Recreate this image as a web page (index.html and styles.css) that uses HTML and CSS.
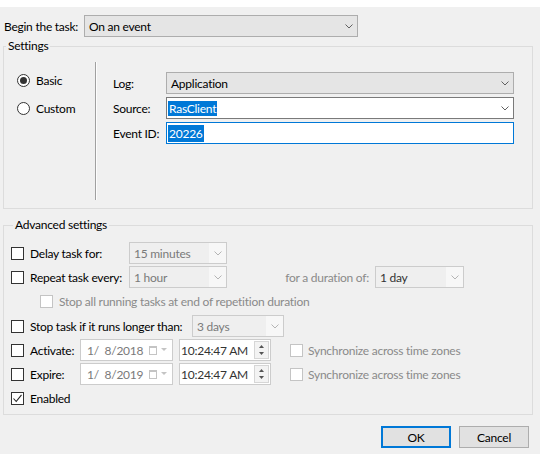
FILE: index.html
```html
<!DOCTYPE html>
<html>
<head>
    <title>Task Trigger</title>
    <link rel="stylesheet" href="styles.css">
</head>
<body>
    <div class="top-gap"></div>
    <div class="dialog">
        <div class="begin-row">
            <span class="begin-label">Begin the task:</span>
            <div class="combo combo-begin">
                <span class="combo-text">On an event</span>
                <span class="combo-arrow"><svg width="8" height="5" viewBox="0 0 8 5"><path d="M0.5 0.5 L4 4 L7.5 0.5" fill="none" stroke="#606060"/></svg></span>
            </div>
        </div>

        <fieldset class="group settings">
            <legend>Settings</legend>
            <div class="settings-body">
                <div class="radio-col">
                    <div class="radio-item"><span class="radio checked"></span>Basic</div>
                    <div class="radio-item"><span class="radio"></span>Custom</div>
                </div>
                <div class="vsep"></div>
                <div class="event-form">
                    <span class="field-label">Log:</span>
                    <div class="combo combo-gray">
                        <span class="combo-text">Application</span>
                        <span class="combo-arrow"><svg width="8" height="5" viewBox="0 0 8 5"><path d="M0.5 0.5 L4 4 L7.5 0.5" fill="none" stroke="#606060"/></svg></span>
                    </div>
                    <span class="field-label">Source:</span>
                    <div class="combo combo-edit">
                        <span class="combo-text"><span class="sel">RasClient</span></span>
                        <span class="combo-arrow"><svg width="8" height="5" viewBox="0 0 8 5"><path d="M0.5 0.5 L4 4 L7.5 0.5" fill="none" stroke="#606060"/></svg></span>
                    </div>
                    <span class="field-label">Event ID:</span>
                    <div class="textbox focused"><span class="sel">20226</span></div>
                </div>
            </div>
        </fieldset>

        <fieldset class="group advanced">
            <legend>Advanced settings</legend>

            <div class="adv-row">
                <span class="check"></span>
                <span class="chk-label w-delay">Delay task for:</span>
                <div class="combo combo-off w-small">
                    <span class="combo-text">15 minutes</span>
                    <span class="combo-arrow"><svg width="8" height="5" viewBox="0 0 8 5"><path d="M0.5 0.5 L4 4 L7.5 0.5" fill="none" stroke="#b4b4b4"/></svg></span>
                </div>
            </div>

            <div class="adv-row">
                <span class="check"></span>
                <span class="chk-label w-delay">Repeat task every:</span>
                <div class="combo combo-off w-small">
                    <span class="combo-text">1 hour</span>
                    <span class="combo-arrow"><svg width="8" height="5" viewBox="0 0 8 5"><path d="M0.5 0.5 L4 4 L7.5 0.5" fill="none" stroke="#b4b4b4"/></svg></span>
                </div>
                <span class="duration-label">for a duration of:</span>
                <div class="combo combo-off w-duration">
                    <span class="combo-text dark">1 day</span>
                    <span class="combo-arrow"><svg width="8" height="5" viewBox="0 0 8 5"><path d="M0.5 0.5 L4 4 L7.5 0.5" fill="none" stroke="#b4b4b4"/></svg></span>
                </div>
            </div>

            <div class="adv-row sub-row">
                <span class="check off"></span>
                <span class="muted">Stop all running tasks at end of repetition duration</span>
            </div>

            <div class="adv-row stop-row">
                <span class="check"></span>
                <span class="chk-label w-stop">Stop task if it runs longer than:</span>
                <div class="combo combo-off w-stopbox">
                    <span class="combo-text">3 days</span>
                    <span class="combo-arrow"><svg width="8" height="5" viewBox="0 0 8 5"><path d="M0.5 0.5 L4 4 L7.5 0.5" fill="none" stroke="#b4b4b4"/></svg></span>
                </div>
            </div>

            <div class="adv-row">
                <span class="check"></span>
                <span class="chk-label w-date">Activate:</span>
                <div class="picker date-picker">
                    <span class="picker-text">1/&nbsp; 8/2018</span>
                    <span class="cal-icon"></span>
                    <svg class="cal-arrow" width="6" height="4" viewBox="0 0 6 4"><path d="M0 0 H6 L3 3 Z" fill="#c4c4c4"/></svg>
                </div>
                <div class="picker time-picker">
                    <span class="picker-text dark">10:24:47 AM</span>
                    <span class="spinner">
                        <svg width="5" height="3" viewBox="0 0 5 3"><path d="M0 3 L2.5 0 L5 3 Z" fill="#555"/></svg>
                        <svg width="5" height="3" viewBox="0 0 5 3"><path d="M0 0 H5 L2.5 3 Z" fill="#555"/></svg>
                    </span>
                </div>
                <span class="check off sync-check"></span>
                <span class="muted">Synchronize across time zones</span>
            </div>

            <div class="adv-row">
                <span class="check"></span>
                <span class="chk-label w-date">Expire:</span>
                <div class="picker date-picker">
                    <span class="picker-text">1/&nbsp; 8/2019</span>
                    <span class="cal-icon"></span>
                    <svg class="cal-arrow" width="6" height="4" viewBox="0 0 6 4"><path d="M0 0 H6 L3 3 Z" fill="#c4c4c4"/></svg>
                </div>
                <div class="picker time-picker">
                    <span class="picker-text dark">10:24:47 AM</span>
                    <span class="spinner">
                        <svg width="5" height="3" viewBox="0 0 5 3"><path d="M0 3 L2.5 0 L5 3 Z" fill="#555"/></svg>
                        <svg width="5" height="3" viewBox="0 0 5 3"><path d="M0 0 H5 L2.5 3 Z" fill="#555"/></svg>
                    </span>
                </div>
                <span class="check off sync-check"></span>
                <span class="muted">Synchronize across time zones</span>
            </div>

            <div class="adv-row enabled-row">
                <span class="check checked">
                    <svg width="11" height="11" viewBox="0 0 11 11"><path d="M1.5 5.5 L4.2 8.5 L9.5 1.8" fill="none" stroke="#222" stroke-width="1.1"/></svg>
                </span>
                <span class="chk-label">Enabled</span>
            </div>
        </fieldset>

        <div class="button-row">
            <button class="btn btn-default">OK</button>
            <button class="btn">Cancel</button>
        </div>
    </div>
</body>
</html>
```

FILE: styles.css
```css
html, body {
    margin: 0;
    padding: 0;
}
body {
    width: 540px;
    height: 454px;
    overflow: hidden;
    font-family: Lato, "Segoe UI", sans-serif;
    font-size: 12px;
    letter-spacing: -0.25px;
    color: #000;
    background: #fff;
}
.top-gap {
    height: 7px;
    background: #fff;
}
.dialog {
    height: 447px;
    background: #f0f0f0;
    box-sizing: border-box;
    padding-top: 8px;
}

/* begin row */
.begin-row {
    display: flex;
    align-items: center;
    height: 22px;
}
.begin-label {
    width: 80px;
    padding-left: 4px;
}
.combo {
    display: flex;
    align-items: center;
    height: 22px;
    box-sizing: border-box;
    border: 1px solid #adadad;
    background: #e5e5e5;
}
.combo-text {
    flex: 1;
    padding-left: 4px;
    white-space: nowrap;
    overflow: hidden;
}
.combo-arrow {
    width: 17px;
    display: flex;
    justify-content: center;
    align-items: center;
    height: 100%;
}
.combo-begin {
    width: 274px;
}

/* group boxes */
.group {
    margin: 1px 0 0 3px;
    padding: 0;
    width: 530px;
    box-sizing: border-box;
    border: 1px solid #dcdcdc;
}
.group legend {
    margin-left: 2px;
    padding: 0 2px;
    line-height: 16px;
}
.settings-body {
    display: flex;
    padding: 8px 0;
}
.radio-col {
    width: 91px;
    box-sizing: border-box;
    padding: 10px 0 0 13px;
}
.radio-item {
    display: flex;
    align-items: center;
    height: 16px;
    margin-bottom: 12px;
}
.radio {
    width: 13px;
    height: 13px;
    box-sizing: border-box;
    border: 1px solid #333;
    border-radius: 50%;
    background: #fff;
    margin-right: 6px;
    display: flex;
    align-items: center;
    justify-content: center;
}
.radio.checked::after {
    content: "";
    width: 7px;
    height: 7px;
    border-radius: 50%;
    background: #333;
}
.vsep {
    width: 0;
    height: 138px;
    border-left: 1px solid #a0a0a0;
    border-right: 1px solid #fdfdfd;
}
.event-form {
    display: grid;
    grid-template-columns: 53px 348px;
    grid-auto-rows: 22px;
    row-gap: 3px;
    align-items: center;
    padding: 10px 0 0 16px;
}
.combo-gray {
    background: #e5e5e5;
}
.combo-edit {
    background: #fff;
    border-color: #7a7a7a;
}
.combo-edit .combo-text {
    padding-left: 1px;
}
.textbox {
    height: 22px;
    box-sizing: border-box;
    border: 1px solid #0078d7;
    background: #fff;
    display: flex;
    align-items: center;
    padding-left: 1px;
}
.sel {
    background: #0078d7;
    color: #fff;
    padding: 1px 1px;
}

/* advanced */
.advanced {
    margin-top: 8px;
    padding: 9px 0 5px 7px;
}
.adv-row {
    display: flex;
    align-items: center;
    height: 22px;
    margin-bottom: 2px;
}
.sub-row {
    margin-bottom: 3px;
    padding-left: 29px;
}
.check {
    width: 13px;
    height: 13px;
    box-sizing: border-box;
    border: 1px solid #333;
    background: #fff;
    margin-right: 6px;
    flex: none;
    display: flex;
    align-items: center;
    justify-content: center;
}
.check.off {
    border-color: #c4c4c4;
}
.chk-label {
    white-space: nowrap;
}
.w-delay {
    width: 99px;
}
.w-stop {
    width: 162px;
}
.w-date {
    width: 50px;
}
.combo-off {
    border-color: #cccccc;
    background: #f7f7f7;
    color: #7a7a7a;
}
.combo-off .combo-text {
    background: #efefef;
    height: 100%;
    display: flex;
    align-items: center;
}
.combo-off .combo-text.dark {
    color: #333;
}
.w-small {
    width: 98px;
}
.w-duration {
    width: 89px;
}
.w-stopbox {
    width: 92px;
}
.duration-label {
    width: 142px;
    text-align: right;
    margin-right: 6px;
    color: #8a8a8a;
    white-space: nowrap;
}
.muted {
    color: #8a8a8a;
    white-space: nowrap;
}
.picker {
    display: flex;
    align-items: center;
    height: 22px;
    box-sizing: border-box;
    border: 1px solid #cccccc;
    background: #fff;
}
.picker-text {
    flex: 1;
    padding-left: 6px;
    color: #7a7a7a;
    white-space: nowrap;
}
.picker-text.dark {
    color: #333;
    padding-left: 1px;
}
.date-picker {
    width: 93px;
    margin-right: 6px;
}
.cal-icon {
    width: 8px;
    height: 9px;
    box-sizing: border-box;
    border: 1px solid #c4c4c4;
    border-top-width: 2px;
    margin-right: 4px;
    flex: none;
}
.cal-arrow {
    margin-right: 5px;
    flex: none;
}
.time-picker {
    width: 92px;
    margin-right: 19px;
}
.spinner {
    width: 15px;
    height: 18px;
    margin-right: 1px;
    box-sizing: border-box;
    border: 1px solid #d6d6d6;
    background: #f3f3f3;
    display: flex;
    flex-direction: column;
    align-items: center;
    justify-content: center;
    gap: 4px;
    flex: none;
}
.sync-check {
    margin-right: 5px;
}
.enabled-row {
    margin-bottom: 0;
}

/* buttons */
.button-row {
    display: flex;
    justify-content: flex-end;
    gap: 8px;
    padding-right: 11px;
    margin-top: 11px;
}
.btn {
    width: 70px;
    height: 22px;
    box-sizing: border-box;
    border: 1px solid #adadad;
    background: #e1e1e1;
    font-family: Lato, "Segoe UI", sans-serif;
    font-size: 12px;
    letter-spacing: -0.25px;
    color: #000;
    padding: 0;
}
.btn-default {
    border: 2px solid #0078d7;
}
```
